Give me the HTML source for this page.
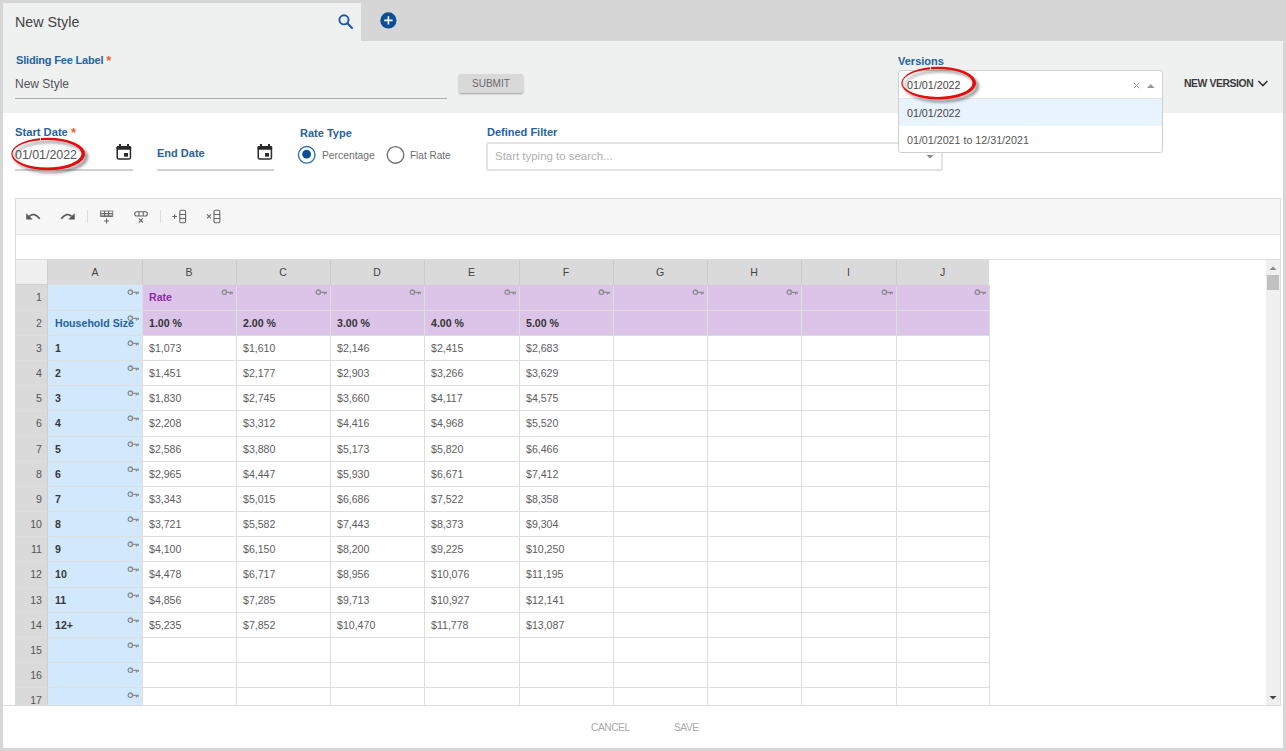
<!DOCTYPE html><html><head><meta charset="utf-8"><title>New Style</title><style>
*{margin:0;padding:0;box-sizing:border-box}
html,body{width:1286px;height:751px;overflow:hidden;background:#d6d6d6;font-family:"Liberation Sans", sans-serif;}
.a{position:absolute}
.t{position:absolute;white-space:nowrap;line-height:1}
.lbl{position:absolute;white-space:nowrap;line-height:1;font-weight:bold;color:#2463a0;font-size:11px}
.req{color:#f0612b;font-size:13px;line-height:0;position:relative;top:1px}
.key{position:absolute}
.cell{position:absolute;white-space:nowrap;line-height:1;font-size:10.6px;color:#555}
</style></head><body>
<div class="a" style="left:3px;top:3px;width:358px;height:38px;background:#eff0f0"></div>
<div class="t" style="left:15px;top:15px;font-size:14.3px;color:#444">New Style</div>
<svg class="a" style="left:336px;top:11.7px" width="20" height="20" viewBox="0 0 20 20"><circle cx="8" cy="7.8" r="4.6" fill="none" stroke="#1b5c9c" stroke-width="1.9"/><path d="M11.3 11.2L16 15.9" stroke="#1b5c9c" stroke-width="2.1" stroke-linecap="round"/></svg>
<svg class="a" style="left:378px;top:10px" width="21" height="21" viewBox="0 0 21 21"><circle cx="10.4" cy="10.4" r="8.1" fill="#0c4f95"/><path d="M10.4 6.2V14.6M6.2 10.4H14.6" stroke="#fff" stroke-width="1.6"/></svg>
<div class="a" style="left:3px;top:41px;width:1280px;height:72px;background:#eff0f0"></div>
<div class="a" style="left:3px;top:113px;width:1280px;height:635px;background:#fff"></div>
<div class="lbl" style="left:16px;top:55px;letter-spacing:-0.18px">Sliding Fee Label <span class="req">*</span></div>
<div class="t" style="left:15px;top:78px;font-size:12px;color:#555">New Style</div>
<div class="a" style="left:15px;top:98px;width:432px;height:1px;background:#a9a9a9"></div>
<div class="a" style="left:459px;top:74px;width:64px;height:19px;background:#d9d9d9;border-radius:2px;box-shadow:0 1px 2px rgba(0,0,0,.35)"></div>
<div class="t" style="left:472px;top:79px;font-size:10px;color:#6a6a6a">SUBMIT</div>
<div class="lbl" style="left:15px;top:127px;font-size:11.2px">Start Date <span class="req">*</span></div>
<div class="t" style="left:15px;top:149px;font-size:12.4px;color:#555">01/01/2022</div>
<div class="a" style="left:15px;top:169px;width:118px;height:2px;background:#d2d2d2"></div>
<svg class="a" style="left:116px;top:144px" width="16" height="17" viewBox="0 0 16 17"><rect x="1.25" y="2.75" width="13.2" height="12.3" rx="1.6" fill="none" stroke="#2a2a2a" stroke-width="1.5"/><rect x="0.5" y="2" width="14.7" height="3.7" rx="1.2" fill="#2a2a2a"/><rect x="3" y="0" width="2" height="3" fill="#2a2a2a"/><rect x="11" y="0" width="2" height="3" fill="#2a2a2a"/><rect x="8" y="9" width="4" height="3.7" fill="#2a2a2a"/></svg>
<svg class="a" style="left:4.00px;top:130.90px;overflow:visible" width="91" height="50"><defs><filter id="sh47" x="-20%" y="-30%" width="150%" height="170%"><feGaussianBlur in="SourceAlpha" stdDeviation="1.8"/><feOffset dx="2.5" dy="3" result="b"/><feComponentTransfer><feFuncA type="linear" slope="0.45"/></feComponentTransfer><feMerge><feMergeNode/><feMergeNode in="SourceGraphic"/></feMerge></filter></defs><path d="M7.30 23.00A36.90 16.20 0 1 0 81.10 23.00A36.90 16.20 0 1 0 7.30 23.00ZM8.50 22.70A34.50 13.80 0 1 0 77.50 22.70A34.50 13.80 0 1 0 8.50 22.70Z" fill="#e30b0b" fill-rule="evenodd" filter="url(#sh47)"/></svg>
<div class="a" style="left:39.6px;top:137.5px;width:1.4px;height:3px;background:#fff"></div>
<div class="lbl" style="left:157px;top:148px">End Date</div>
<svg class="a" style="left:257px;top:144px" width="16" height="17" viewBox="0 0 16 17"><rect x="1.25" y="2.75" width="13.2" height="12.3" rx="1.6" fill="none" stroke="#2a2a2a" stroke-width="1.5"/><rect x="0.5" y="2" width="14.7" height="3.7" rx="1.2" fill="#2a2a2a"/><rect x="3" y="0" width="2" height="3" fill="#2a2a2a"/><rect x="11" y="0" width="2" height="3" fill="#2a2a2a"/><rect x="8" y="9" width="4" height="3.7" fill="#2a2a2a"/></svg>
<div class="a" style="left:157px;top:169px;width:117px;height:2px;background:#d2d2d2"></div>
<div class="lbl" style="left:300px;top:128px">Rate Type</div>
<svg class="a" style="left:297px;top:145px" width="20" height="20" viewBox="0 0 20 20"><circle cx="9.7" cy="9.8" r="8.3" fill="#fff" stroke="#2f6fae" stroke-width="1.4"/><circle cx="9.6" cy="9.2" r="4.4" fill="#0b4f96"/></svg>
<div class="t" style="left:322px;top:151px;font-size:10.3px;color:#6e6e6e">Percentage</div>
<svg class="a" style="left:386px;top:145px" width="20" height="20" viewBox="0 0 20 20"><circle cx="9.5" cy="9.9" r="8.3" fill="#fff" stroke="#6e6e6e" stroke-width="1.4"/></svg>
<div class="t" style="left:410px;top:151px;font-size:10px;color:#6e6e6e">Flat Rate</div>
<div class="lbl" style="left:487px;top:127px">Defined Filter</div>
<div class="a" style="left:486px;top:142px;width:457px;height:29px;border:2px solid #e2e2e2;border-radius:3px;background:#fff"></div>
<div class="t" style="left:495px;top:151px;font-size:11.45px;color:#b0b0b0">Start typing to search...</div>
<svg class="a" style="left:925px;top:154px" width="10" height="6" viewBox="0 0 10 6"><path d="M1.5 1L8.5 1L5 4.6Z" fill="#888"/></svg>
<div class="lbl" style="left:898px;top:56px">Versions</div>
<div class="a" style="left:898px;top:70px;width:265px;height:83px;background:#fff;border:1px solid #cfcfcf;border-radius:3px"></div>
<div class="a" style="left:899px;top:98px;width:263px;height:1px;background:#e6e6e6"></div>
<div class="a" style="left:899px;top:99px;width:263px;height:27px;background:#e8f3fd"></div>
<div class="t" style="left:907px;top:80px;font-size:10.7px;color:#444">01/01/2022</div>
<div class="t" style="left:907px;top:108px;font-size:10.7px;color:#444">01/01/2022</div>
<div class="t" style="left:907px;top:135px;font-size:10.7px;color:#555">01/01/2021 to 12/31/2021</div>
<svg class="a" style="left:1132px;top:81px" width="9" height="9" viewBox="0 0 9 9"><path d="M1.8 1.8L7.2 7.2M7.2 1.8L1.8 7.2" stroke="#999" stroke-width="1"/></svg>
<svg class="a" style="left:1146px;top:83px" width="10" height="6" viewBox="0 0 10 6"><path d="M1 5L4.8 1L8.6 5Z" fill="#999"/></svg>
<div class="t" style="left:1184px;top:79px;font-size:10.4px;color:#3a3a3a;letter-spacing:-0.42px;font-weight:bold">NEW VERSION</div>
<svg class="a" style="left:1256px;top:78.5px" width="13" height="9" viewBox="0 0 13 9"><path d="M2.4 2L6.9 6.5L11.4 2" stroke="#333" stroke-width="1.6" fill="none"/></svg>
<svg class="a" style="left:893.50px;top:60.00px;overflow:visible" width="92" height="50"><defs><filter id="sh937" x="-20%" y="-30%" width="150%" height="170%"><feGaussianBlur in="SourceAlpha" stdDeviation="1.8"/><feOffset dx="2.5" dy="3" result="b"/><feComponentTransfer><feFuncA type="linear" slope="0.45"/></feComponentTransfer><feMerge><feMergeNode/><feMergeNode in="SourceGraphic"/></feMerge></filter></defs><path d="M7.30 23.20A37.40 16.40 0 1 0 82.10 23.20A37.40 16.40 0 1 0 7.30 23.20ZM8.50 22.90A35.00 14.00 0 1 0 78.50 22.90A35.00 14.00 0 1 0 8.50 22.90Z" fill="#e30b0b" fill-rule="evenodd" filter="url(#sh937)"/></svg>
<div class="a" style="left:929.6px;top:66.5px;width:1.4px;height:3px;background:#eff0f0"></div>
<div class="a" style="left:15px;top:198px;width:1266px;height:508px;border:1px solid #dcdcdc;background:#fff"></div>
<div class="a" style="left:16px;top:199px;width:1264px;height:36px;background:#f7f7f7;border-bottom:1px solid #e2e2e2"></div>
<svg class="a" style="left:16px;top:199px" width="220" height="35" viewBox="0 0 220 35"><g stroke="#555" fill="none" stroke-width="1.6"><path d="M13.4 17.4Q18 12.6 23.8 19.8"/><path d="M45.2 19.8Q51 12.6 55.6 17.4"/></g><path d="M10.3 14.2V20.6H16.7Z M58.7 14.2V20.6H52.3Z" fill="#555"/><rect x="71" y="11" width="1" height="13" fill="#ddd"/><rect x="144" y="11" width="1" height="13" fill="#ddd"/><g stroke="#666" fill="none" stroke-width="1.1"><rect x="84.5" y="12" width="12.2" height="5.2" stroke-opacity="0.75"/><path d="M84.5 14.6H96.7M88.6 12V17.2M92.6 12V17.2"/><path d="M84.5 17.2H96.7" stroke-width="1.4"/><path d="M90.6 19.5V24.5M88.1 22H93.1"/><rect x="118.8" y="12.8" width="12.5" height="4.2" rx="2.1"/><path d="M123 12.8V17M127.2 12.8V17"/><path d="M122.8 19.3L126.8 23.5M126.8 19.3L122.8 23.5"/><rect x="163.8" y="11.3" width="5.8" height="12.4" rx="1.2"/><path d="M163.8 15.5H169.6M163.8 19.5H169.6"/><path d="M156.3 17.5H161M158.6 15.2V19.8"/><rect x="198" y="11.3" width="5.8" height="12.4" rx="1.2"/><path d="M198 15.5H203.8M198 19.5H203.8"/><path d="M191 15.4L195 19.4M195 15.4L191 19.4"/></g></svg>
<div class="a" style="left:16px;top:259px;width:1264px;height:1px;background:#dedede"></div>
<div class="a" style="left:16px;top:260px;width:32px;height:25px;background:#efefef"></div>
<div class="a" style="left:48px;top:260px;width:941px;height:25px;background:#dadada"></div>
<div class="t" style="left:48px;top:267px;width:94px;text-align:center;font-size:10.5px;color:#444">A</div>
<div class="t" style="left:142px;top:267px;width:94px;text-align:center;font-size:10.5px;color:#444">B</div>
<div class="a" style="left:142px;top:260px;width:1px;height:25px;background:#cbcbcb"></div>
<div class="t" style="left:236px;top:267px;width:94px;text-align:center;font-size:10.5px;color:#444">C</div>
<div class="a" style="left:236px;top:260px;width:1px;height:25px;background:#cbcbcb"></div>
<div class="t" style="left:330px;top:267px;width:94px;text-align:center;font-size:10.5px;color:#444">D</div>
<div class="a" style="left:330px;top:260px;width:1px;height:25px;background:#cbcbcb"></div>
<div class="t" style="left:424px;top:267px;width:95px;text-align:center;font-size:10.5px;color:#444">E</div>
<div class="a" style="left:424px;top:260px;width:1px;height:25px;background:#cbcbcb"></div>
<div class="t" style="left:519px;top:267px;width:94px;text-align:center;font-size:10.5px;color:#444">F</div>
<div class="a" style="left:519px;top:260px;width:1px;height:25px;background:#cbcbcb"></div>
<div class="t" style="left:613px;top:267px;width:94px;text-align:center;font-size:10.5px;color:#444">G</div>
<div class="a" style="left:613px;top:260px;width:1px;height:25px;background:#cbcbcb"></div>
<div class="t" style="left:707px;top:267px;width:94px;text-align:center;font-size:10.5px;color:#444">H</div>
<div class="a" style="left:707px;top:260px;width:1px;height:25px;background:#cbcbcb"></div>
<div class="t" style="left:801px;top:267px;width:95px;text-align:center;font-size:10.5px;color:#444">I</div>
<div class="a" style="left:801px;top:260px;width:1px;height:25px;background:#cbcbcb"></div>
<div class="t" style="left:896px;top:267px;width:93px;text-align:center;font-size:10.5px;color:#444">J</div>
<div class="a" style="left:896px;top:260px;width:1px;height:25px;background:#cbcbcb"></div>
<div class="a" style="left:16px;top:285px;width:32px;height:420px;background:#dadada"></div>
<div class="a" style="left:48px;top:285px;width:94px;height:420px;background:#d2e8fc"></div>
<div class="a" style="left:142px;top:285px;width:847px;height:50px;background:#dcc4e8"></div>
<div class="a" style="left:16px;top:310px;width:973px;height:1px;background:#dedede"></div>
<div class="a" style="left:16px;top:335px;width:973px;height:1px;background:#dedede"></div>
<div class="a" style="left:16px;top:360px;width:973px;height:1px;background:#dedede"></div>
<div class="a" style="left:16px;top:385px;width:973px;height:1px;background:#dedede"></div>
<div class="a" style="left:16px;top:410px;width:973px;height:1px;background:#dedede"></div>
<div class="a" style="left:16px;top:436px;width:973px;height:1px;background:#dedede"></div>
<div class="a" style="left:16px;top:461px;width:973px;height:1px;background:#dedede"></div>
<div class="a" style="left:16px;top:486px;width:973px;height:1px;background:#dedede"></div>
<div class="a" style="left:16px;top:511px;width:973px;height:1px;background:#dedede"></div>
<div class="a" style="left:16px;top:536px;width:973px;height:1px;background:#dedede"></div>
<div class="a" style="left:16px;top:561px;width:973px;height:1px;background:#dedede"></div>
<div class="a" style="left:16px;top:587px;width:973px;height:1px;background:#dedede"></div>
<div class="a" style="left:16px;top:612px;width:973px;height:1px;background:#dedede"></div>
<div class="a" style="left:16px;top:637px;width:973px;height:1px;background:#dedede"></div>
<div class="a" style="left:16px;top:662px;width:973px;height:1px;background:#dedede"></div>
<div class="a" style="left:16px;top:687px;width:973px;height:1px;background:#dedede"></div>
<div class="a" style="left:142px;top:285px;width:1px;height:420px;background:#dedede"></div>
<div class="a" style="left:236px;top:285px;width:1px;height:420px;background:#dedede"></div>
<div class="a" style="left:330px;top:285px;width:1px;height:420px;background:#dedede"></div>
<div class="a" style="left:424px;top:285px;width:1px;height:420px;background:#dedede"></div>
<div class="a" style="left:519px;top:285px;width:1px;height:420px;background:#dedede"></div>
<div class="a" style="left:613px;top:285px;width:1px;height:420px;background:#dedede"></div>
<div class="a" style="left:707px;top:285px;width:1px;height:420px;background:#dedede"></div>
<div class="a" style="left:801px;top:285px;width:1px;height:420px;background:#dedede"></div>
<div class="a" style="left:896px;top:285px;width:1px;height:420px;background:#dedede"></div>
<div class="a" style="left:989px;top:285px;width:1px;height:420px;background:#dedede"></div>
<div class="a" style="left:47px;top:260px;width:1px;height:445px;background:#d0d0d0"></div>
<div class="a" style="left:16px;top:284px;width:31px;height:1px;background:#d0d0d0"></div>
<div class="t" style="left:16px;top:292px;width:26px;text-align:right;font-size:10.6px;color:#555">1</div>
<svg class="key" style="left:127px;top:289px" width="13" height="8" viewBox="0 0 13 8"><circle cx="3.3" cy="3.2" r="2.2" fill="none" stroke="#8c8c8c" stroke-width="1.3"/><path d="M5.4 3.4H11.8M9.4 3.4V5.6M11.2 3.4V5" stroke="#8c8c8c" stroke-width="1.3" fill="none"/></svg>
<div class="cell" style="left:149px;top:292px;font-weight:bold;color:#8a2aa8">Rate</div>
<svg class="key" style="left:221px;top:289px" width="13" height="8" viewBox="0 0 13 8"><circle cx="3.3" cy="3.2" r="2.2" fill="none" stroke="#8c8c8c" stroke-width="1.3"/><path d="M5.4 3.4H11.8M9.4 3.4V5.6M11.2 3.4V5" stroke="#8c8c8c" stroke-width="1.3" fill="none"/></svg>
<svg class="key" style="left:315px;top:289px" width="13" height="8" viewBox="0 0 13 8"><circle cx="3.3" cy="3.2" r="2.2" fill="none" stroke="#8c8c8c" stroke-width="1.3"/><path d="M5.4 3.4H11.8M9.4 3.4V5.6M11.2 3.4V5" stroke="#8c8c8c" stroke-width="1.3" fill="none"/></svg>
<svg class="key" style="left:409px;top:289px" width="13" height="8" viewBox="0 0 13 8"><circle cx="3.3" cy="3.2" r="2.2" fill="none" stroke="#8c8c8c" stroke-width="1.3"/><path d="M5.4 3.4H11.8M9.4 3.4V5.6M11.2 3.4V5" stroke="#8c8c8c" stroke-width="1.3" fill="none"/></svg>
<svg class="key" style="left:504px;top:289px" width="13" height="8" viewBox="0 0 13 8"><circle cx="3.3" cy="3.2" r="2.2" fill="none" stroke="#8c8c8c" stroke-width="1.3"/><path d="M5.4 3.4H11.8M9.4 3.4V5.6M11.2 3.4V5" stroke="#8c8c8c" stroke-width="1.3" fill="none"/></svg>
<svg class="key" style="left:598px;top:289px" width="13" height="8" viewBox="0 0 13 8"><circle cx="3.3" cy="3.2" r="2.2" fill="none" stroke="#8c8c8c" stroke-width="1.3"/><path d="M5.4 3.4H11.8M9.4 3.4V5.6M11.2 3.4V5" stroke="#8c8c8c" stroke-width="1.3" fill="none"/></svg>
<svg class="key" style="left:692px;top:289px" width="13" height="8" viewBox="0 0 13 8"><circle cx="3.3" cy="3.2" r="2.2" fill="none" stroke="#8c8c8c" stroke-width="1.3"/><path d="M5.4 3.4H11.8M9.4 3.4V5.6M11.2 3.4V5" stroke="#8c8c8c" stroke-width="1.3" fill="none"/></svg>
<svg class="key" style="left:786px;top:289px" width="13" height="8" viewBox="0 0 13 8"><circle cx="3.3" cy="3.2" r="2.2" fill="none" stroke="#8c8c8c" stroke-width="1.3"/><path d="M5.4 3.4H11.8M9.4 3.4V5.6M11.2 3.4V5" stroke="#8c8c8c" stroke-width="1.3" fill="none"/></svg>
<svg class="key" style="left:881px;top:289px" width="13" height="8" viewBox="0 0 13 8"><circle cx="3.3" cy="3.2" r="2.2" fill="none" stroke="#8c8c8c" stroke-width="1.3"/><path d="M5.4 3.4H11.8M9.4 3.4V5.6M11.2 3.4V5" stroke="#8c8c8c" stroke-width="1.3" fill="none"/></svg>
<svg class="key" style="left:974px;top:289px" width="13" height="8" viewBox="0 0 13 8"><circle cx="3.3" cy="3.2" r="2.2" fill="none" stroke="#8c8c8c" stroke-width="1.3"/><path d="M5.4 3.4H11.8M9.4 3.4V5.6M11.2 3.4V5" stroke="#8c8c8c" stroke-width="1.3" fill="none"/></svg>
<div class="t" style="left:16px;top:318px;width:26px;text-align:right;font-size:10.6px;color:#555">2</div>
<div class="cell" style="left:55px;top:318px;font-weight:bold;color:#2463a0">Household Size</div>
<svg class="key" style="left:127px;top:315px" width="13" height="8" viewBox="0 0 13 8"><circle cx="3.3" cy="3.2" r="2.2" fill="none" stroke="#8c8c8c" stroke-width="1.3"/><path d="M5.4 3.4H11.8M9.4 3.4V5.6M11.2 3.4V5" stroke="#8c8c8c" stroke-width="1.3" fill="none"/></svg>
<div class="cell" style="left:149px;top:318px;font-weight:bold;color:#333">1.00 %</div>
<div class="cell" style="left:243px;top:318px;font-weight:bold;color:#333">2.00 %</div>
<div class="cell" style="left:337px;top:318px;font-weight:bold;color:#333">3.00 %</div>
<div class="cell" style="left:431px;top:318px;font-weight:bold;color:#333">4.00 %</div>
<div class="cell" style="left:526px;top:318px;font-weight:bold;color:#333">5.00 %</div>
<div class="t" style="left:16px;top:343px;width:26px;text-align:right;font-size:10.6px;color:#555">3</div>
<div class="cell" style="left:55px;top:343px;font-weight:bold;color:#383838">1</div>
<svg class="key" style="left:127px;top:340px" width="13" height="8" viewBox="0 0 13 8"><circle cx="3.3" cy="3.2" r="2.2" fill="none" stroke="#8c8c8c" stroke-width="1.3"/><path d="M5.4 3.4H11.8M9.4 3.4V5.6M11.2 3.4V5" stroke="#8c8c8c" stroke-width="1.3" fill="none"/></svg>
<div class="cell" style="left:149px;top:343px;color:#5e5e5e">$1,073</div>
<div class="cell" style="left:243px;top:343px;color:#5e5e5e">$1,610</div>
<div class="cell" style="left:337px;top:343px;color:#5e5e5e">$2,146</div>
<div class="cell" style="left:431px;top:343px;color:#5e5e5e">$2,415</div>
<div class="cell" style="left:526px;top:343px;color:#5e5e5e">$2,683</div>
<div class="t" style="left:16px;top:368px;width:26px;text-align:right;font-size:10.6px;color:#555">4</div>
<div class="cell" style="left:55px;top:368px;font-weight:bold;color:#383838">2</div>
<svg class="key" style="left:127px;top:365px" width="13" height="8" viewBox="0 0 13 8"><circle cx="3.3" cy="3.2" r="2.2" fill="none" stroke="#8c8c8c" stroke-width="1.3"/><path d="M5.4 3.4H11.8M9.4 3.4V5.6M11.2 3.4V5" stroke="#8c8c8c" stroke-width="1.3" fill="none"/></svg>
<div class="cell" style="left:149px;top:368px;color:#5e5e5e">$1,451</div>
<div class="cell" style="left:243px;top:368px;color:#5e5e5e">$2,177</div>
<div class="cell" style="left:337px;top:368px;color:#5e5e5e">$2,903</div>
<div class="cell" style="left:431px;top:368px;color:#5e5e5e">$3,266</div>
<div class="cell" style="left:526px;top:368px;color:#5e5e5e">$3,629</div>
<div class="t" style="left:16px;top:393px;width:26px;text-align:right;font-size:10.6px;color:#555">5</div>
<div class="cell" style="left:55px;top:393px;font-weight:bold;color:#383838">3</div>
<svg class="key" style="left:127px;top:390px" width="13" height="8" viewBox="0 0 13 8"><circle cx="3.3" cy="3.2" r="2.2" fill="none" stroke="#8c8c8c" stroke-width="1.3"/><path d="M5.4 3.4H11.8M9.4 3.4V5.6M11.2 3.4V5" stroke="#8c8c8c" stroke-width="1.3" fill="none"/></svg>
<div class="cell" style="left:149px;top:393px;color:#5e5e5e">$1,830</div>
<div class="cell" style="left:243px;top:393px;color:#5e5e5e">$2,745</div>
<div class="cell" style="left:337px;top:393px;color:#5e5e5e">$3,660</div>
<div class="cell" style="left:431px;top:393px;color:#5e5e5e">$4,117</div>
<div class="cell" style="left:526px;top:393px;color:#5e5e5e">$4,575</div>
<div class="t" style="left:16px;top:418px;width:26px;text-align:right;font-size:10.6px;color:#555">6</div>
<div class="cell" style="left:55px;top:418px;font-weight:bold;color:#383838">4</div>
<svg class="key" style="left:127px;top:415px" width="13" height="8" viewBox="0 0 13 8"><circle cx="3.3" cy="3.2" r="2.2" fill="none" stroke="#8c8c8c" stroke-width="1.3"/><path d="M5.4 3.4H11.8M9.4 3.4V5.6M11.2 3.4V5" stroke="#8c8c8c" stroke-width="1.3" fill="none"/></svg>
<div class="cell" style="left:149px;top:418px;color:#5e5e5e">$2,208</div>
<div class="cell" style="left:243px;top:418px;color:#5e5e5e">$3,312</div>
<div class="cell" style="left:337px;top:418px;color:#5e5e5e">$4,416</div>
<div class="cell" style="left:431px;top:418px;color:#5e5e5e">$4,968</div>
<div class="cell" style="left:526px;top:418px;color:#5e5e5e">$5,520</div>
<div class="t" style="left:16px;top:444px;width:26px;text-align:right;font-size:10.6px;color:#555">7</div>
<div class="cell" style="left:55px;top:444px;font-weight:bold;color:#383838">5</div>
<svg class="key" style="left:127px;top:441px" width="13" height="8" viewBox="0 0 13 8"><circle cx="3.3" cy="3.2" r="2.2" fill="none" stroke="#8c8c8c" stroke-width="1.3"/><path d="M5.4 3.4H11.8M9.4 3.4V5.6M11.2 3.4V5" stroke="#8c8c8c" stroke-width="1.3" fill="none"/></svg>
<div class="cell" style="left:149px;top:444px;color:#5e5e5e">$2,586</div>
<div class="cell" style="left:243px;top:444px;color:#5e5e5e">$3,880</div>
<div class="cell" style="left:337px;top:444px;color:#5e5e5e">$5,173</div>
<div class="cell" style="left:431px;top:444px;color:#5e5e5e">$5,820</div>
<div class="cell" style="left:526px;top:444px;color:#5e5e5e">$6,466</div>
<div class="t" style="left:16px;top:469px;width:26px;text-align:right;font-size:10.6px;color:#555">8</div>
<div class="cell" style="left:55px;top:469px;font-weight:bold;color:#383838">6</div>
<svg class="key" style="left:127px;top:466px" width="13" height="8" viewBox="0 0 13 8"><circle cx="3.3" cy="3.2" r="2.2" fill="none" stroke="#8c8c8c" stroke-width="1.3"/><path d="M5.4 3.4H11.8M9.4 3.4V5.6M11.2 3.4V5" stroke="#8c8c8c" stroke-width="1.3" fill="none"/></svg>
<div class="cell" style="left:149px;top:469px;color:#5e5e5e">$2,965</div>
<div class="cell" style="left:243px;top:469px;color:#5e5e5e">$4,447</div>
<div class="cell" style="left:337px;top:469px;color:#5e5e5e">$5,930</div>
<div class="cell" style="left:431px;top:469px;color:#5e5e5e">$6,671</div>
<div class="cell" style="left:526px;top:469px;color:#5e5e5e">$7,412</div>
<div class="t" style="left:16px;top:494px;width:26px;text-align:right;font-size:10.6px;color:#555">9</div>
<div class="cell" style="left:55px;top:494px;font-weight:bold;color:#383838">7</div>
<svg class="key" style="left:127px;top:491px" width="13" height="8" viewBox="0 0 13 8"><circle cx="3.3" cy="3.2" r="2.2" fill="none" stroke="#8c8c8c" stroke-width="1.3"/><path d="M5.4 3.4H11.8M9.4 3.4V5.6M11.2 3.4V5" stroke="#8c8c8c" stroke-width="1.3" fill="none"/></svg>
<div class="cell" style="left:149px;top:494px;color:#5e5e5e">$3,343</div>
<div class="cell" style="left:243px;top:494px;color:#5e5e5e">$5,015</div>
<div class="cell" style="left:337px;top:494px;color:#5e5e5e">$6,686</div>
<div class="cell" style="left:431px;top:494px;color:#5e5e5e">$7,522</div>
<div class="cell" style="left:526px;top:494px;color:#5e5e5e">$8,358</div>
<div class="t" style="left:16px;top:519px;width:26px;text-align:right;font-size:10.6px;color:#555">10</div>
<div class="cell" style="left:55px;top:519px;font-weight:bold;color:#383838">8</div>
<svg class="key" style="left:127px;top:516px" width="13" height="8" viewBox="0 0 13 8"><circle cx="3.3" cy="3.2" r="2.2" fill="none" stroke="#8c8c8c" stroke-width="1.3"/><path d="M5.4 3.4H11.8M9.4 3.4V5.6M11.2 3.4V5" stroke="#8c8c8c" stroke-width="1.3" fill="none"/></svg>
<div class="cell" style="left:149px;top:519px;color:#5e5e5e">$3,721</div>
<div class="cell" style="left:243px;top:519px;color:#5e5e5e">$5,582</div>
<div class="cell" style="left:337px;top:519px;color:#5e5e5e">$7,443</div>
<div class="cell" style="left:431px;top:519px;color:#5e5e5e">$8,373</div>
<div class="cell" style="left:526px;top:519px;color:#5e5e5e">$9,304</div>
<div class="t" style="left:16px;top:544px;width:26px;text-align:right;font-size:10.6px;color:#555">11</div>
<div class="cell" style="left:55px;top:544px;font-weight:bold;color:#383838">9</div>
<svg class="key" style="left:127px;top:541px" width="13" height="8" viewBox="0 0 13 8"><circle cx="3.3" cy="3.2" r="2.2" fill="none" stroke="#8c8c8c" stroke-width="1.3"/><path d="M5.4 3.4H11.8M9.4 3.4V5.6M11.2 3.4V5" stroke="#8c8c8c" stroke-width="1.3" fill="none"/></svg>
<div class="cell" style="left:149px;top:544px;color:#5e5e5e">$4,100</div>
<div class="cell" style="left:243px;top:544px;color:#5e5e5e">$6,150</div>
<div class="cell" style="left:337px;top:544px;color:#5e5e5e">$8,200</div>
<div class="cell" style="left:431px;top:544px;color:#5e5e5e">$9,225</div>
<div class="cell" style="left:526px;top:544px;color:#5e5e5e">$10,250</div>
<div class="t" style="left:16px;top:569px;width:26px;text-align:right;font-size:10.6px;color:#555">12</div>
<div class="cell" style="left:55px;top:569px;font-weight:bold;color:#383838">10</div>
<svg class="key" style="left:127px;top:566px" width="13" height="8" viewBox="0 0 13 8"><circle cx="3.3" cy="3.2" r="2.2" fill="none" stroke="#8c8c8c" stroke-width="1.3"/><path d="M5.4 3.4H11.8M9.4 3.4V5.6M11.2 3.4V5" stroke="#8c8c8c" stroke-width="1.3" fill="none"/></svg>
<div class="cell" style="left:149px;top:569px;color:#5e5e5e">$4,478</div>
<div class="cell" style="left:243px;top:569px;color:#5e5e5e">$6,717</div>
<div class="cell" style="left:337px;top:569px;color:#5e5e5e">$8,956</div>
<div class="cell" style="left:431px;top:569px;color:#5e5e5e">$10,076</div>
<div class="cell" style="left:526px;top:569px;color:#5e5e5e">$11,195</div>
<div class="t" style="left:16px;top:595px;width:26px;text-align:right;font-size:10.6px;color:#555">13</div>
<div class="cell" style="left:55px;top:595px;font-weight:bold;color:#383838">11</div>
<svg class="key" style="left:127px;top:592px" width="13" height="8" viewBox="0 0 13 8"><circle cx="3.3" cy="3.2" r="2.2" fill="none" stroke="#8c8c8c" stroke-width="1.3"/><path d="M5.4 3.4H11.8M9.4 3.4V5.6M11.2 3.4V5" stroke="#8c8c8c" stroke-width="1.3" fill="none"/></svg>
<div class="cell" style="left:149px;top:595px;color:#5e5e5e">$4,856</div>
<div class="cell" style="left:243px;top:595px;color:#5e5e5e">$7,285</div>
<div class="cell" style="left:337px;top:595px;color:#5e5e5e">$9,713</div>
<div class="cell" style="left:431px;top:595px;color:#5e5e5e">$10,927</div>
<div class="cell" style="left:526px;top:595px;color:#5e5e5e">$12,141</div>
<div class="t" style="left:16px;top:620px;width:26px;text-align:right;font-size:10.6px;color:#555">14</div>
<div class="cell" style="left:55px;top:620px;font-weight:bold;color:#383838">12+</div>
<svg class="key" style="left:127px;top:617px" width="13" height="8" viewBox="0 0 13 8"><circle cx="3.3" cy="3.2" r="2.2" fill="none" stroke="#8c8c8c" stroke-width="1.3"/><path d="M5.4 3.4H11.8M9.4 3.4V5.6M11.2 3.4V5" stroke="#8c8c8c" stroke-width="1.3" fill="none"/></svg>
<div class="cell" style="left:149px;top:620px;color:#5e5e5e">$5,235</div>
<div class="cell" style="left:243px;top:620px;color:#5e5e5e">$7,852</div>
<div class="cell" style="left:337px;top:620px;color:#5e5e5e">$10,470</div>
<div class="cell" style="left:431px;top:620px;color:#5e5e5e">$11,778</div>
<div class="cell" style="left:526px;top:620px;color:#5e5e5e">$13,087</div>
<div class="t" style="left:16px;top:645px;width:26px;text-align:right;font-size:10.6px;color:#555">15</div>
<svg class="key" style="left:127px;top:642px" width="13" height="8" viewBox="0 0 13 8"><circle cx="3.3" cy="3.2" r="2.2" fill="none" stroke="#8c8c8c" stroke-width="1.3"/><path d="M5.4 3.4H11.8M9.4 3.4V5.6M11.2 3.4V5" stroke="#8c8c8c" stroke-width="1.3" fill="none"/></svg>
<div class="t" style="left:16px;top:670px;width:26px;text-align:right;font-size:10.6px;color:#555">16</div>
<svg class="key" style="left:127px;top:667px" width="13" height="8" viewBox="0 0 13 8"><circle cx="3.3" cy="3.2" r="2.2" fill="none" stroke="#8c8c8c" stroke-width="1.3"/><path d="M5.4 3.4H11.8M9.4 3.4V5.6M11.2 3.4V5" stroke="#8c8c8c" stroke-width="1.3" fill="none"/></svg>
<div class="t" style="left:16px;top:695px;width:26px;text-align:right;font-size:10.6px;color:#555">17</div>
<svg class="key" style="left:127px;top:692px" width="13" height="8" viewBox="0 0 13 8"><circle cx="3.3" cy="3.2" r="2.2" fill="none" stroke="#8c8c8c" stroke-width="1.3"/><path d="M5.4 3.4H11.8M9.4 3.4V5.6M11.2 3.4V5" stroke="#8c8c8c" stroke-width="1.3" fill="none"/></svg>
<div class="a" style="left:1266px;top:260px;width:14px;height:445px;background:#f0f0f0"></div>
<svg class="a" style="left:1268px;top:265px" width="10" height="6"><path d="M1.5 5L5 1.5L8.5 5Z" fill="#888"/></svg>
<div class="a" style="left:1267px;top:275px;width:12px;height:15px;background:#c1c1c1"></div>
<svg class="a" style="left:1268px;top:694.7px" width="10" height="6"><path d="M1.5 1L8.5 1L5 4.5Z" fill="#444"/></svg>
<div class="a" style="left:3px;top:705px;width:1278px;height:1px;background:#dcdcdc"></div>
<div class="t" style="left:591px;top:723px;font-size:10.2px;color:#aaa;letter-spacing:-0.45px">CANCEL</div>
<div class="t" style="left:674px;top:723px;font-size:10.2px;color:#aaa;letter-spacing:-0.45px">SAVE</div>
</body></html>
